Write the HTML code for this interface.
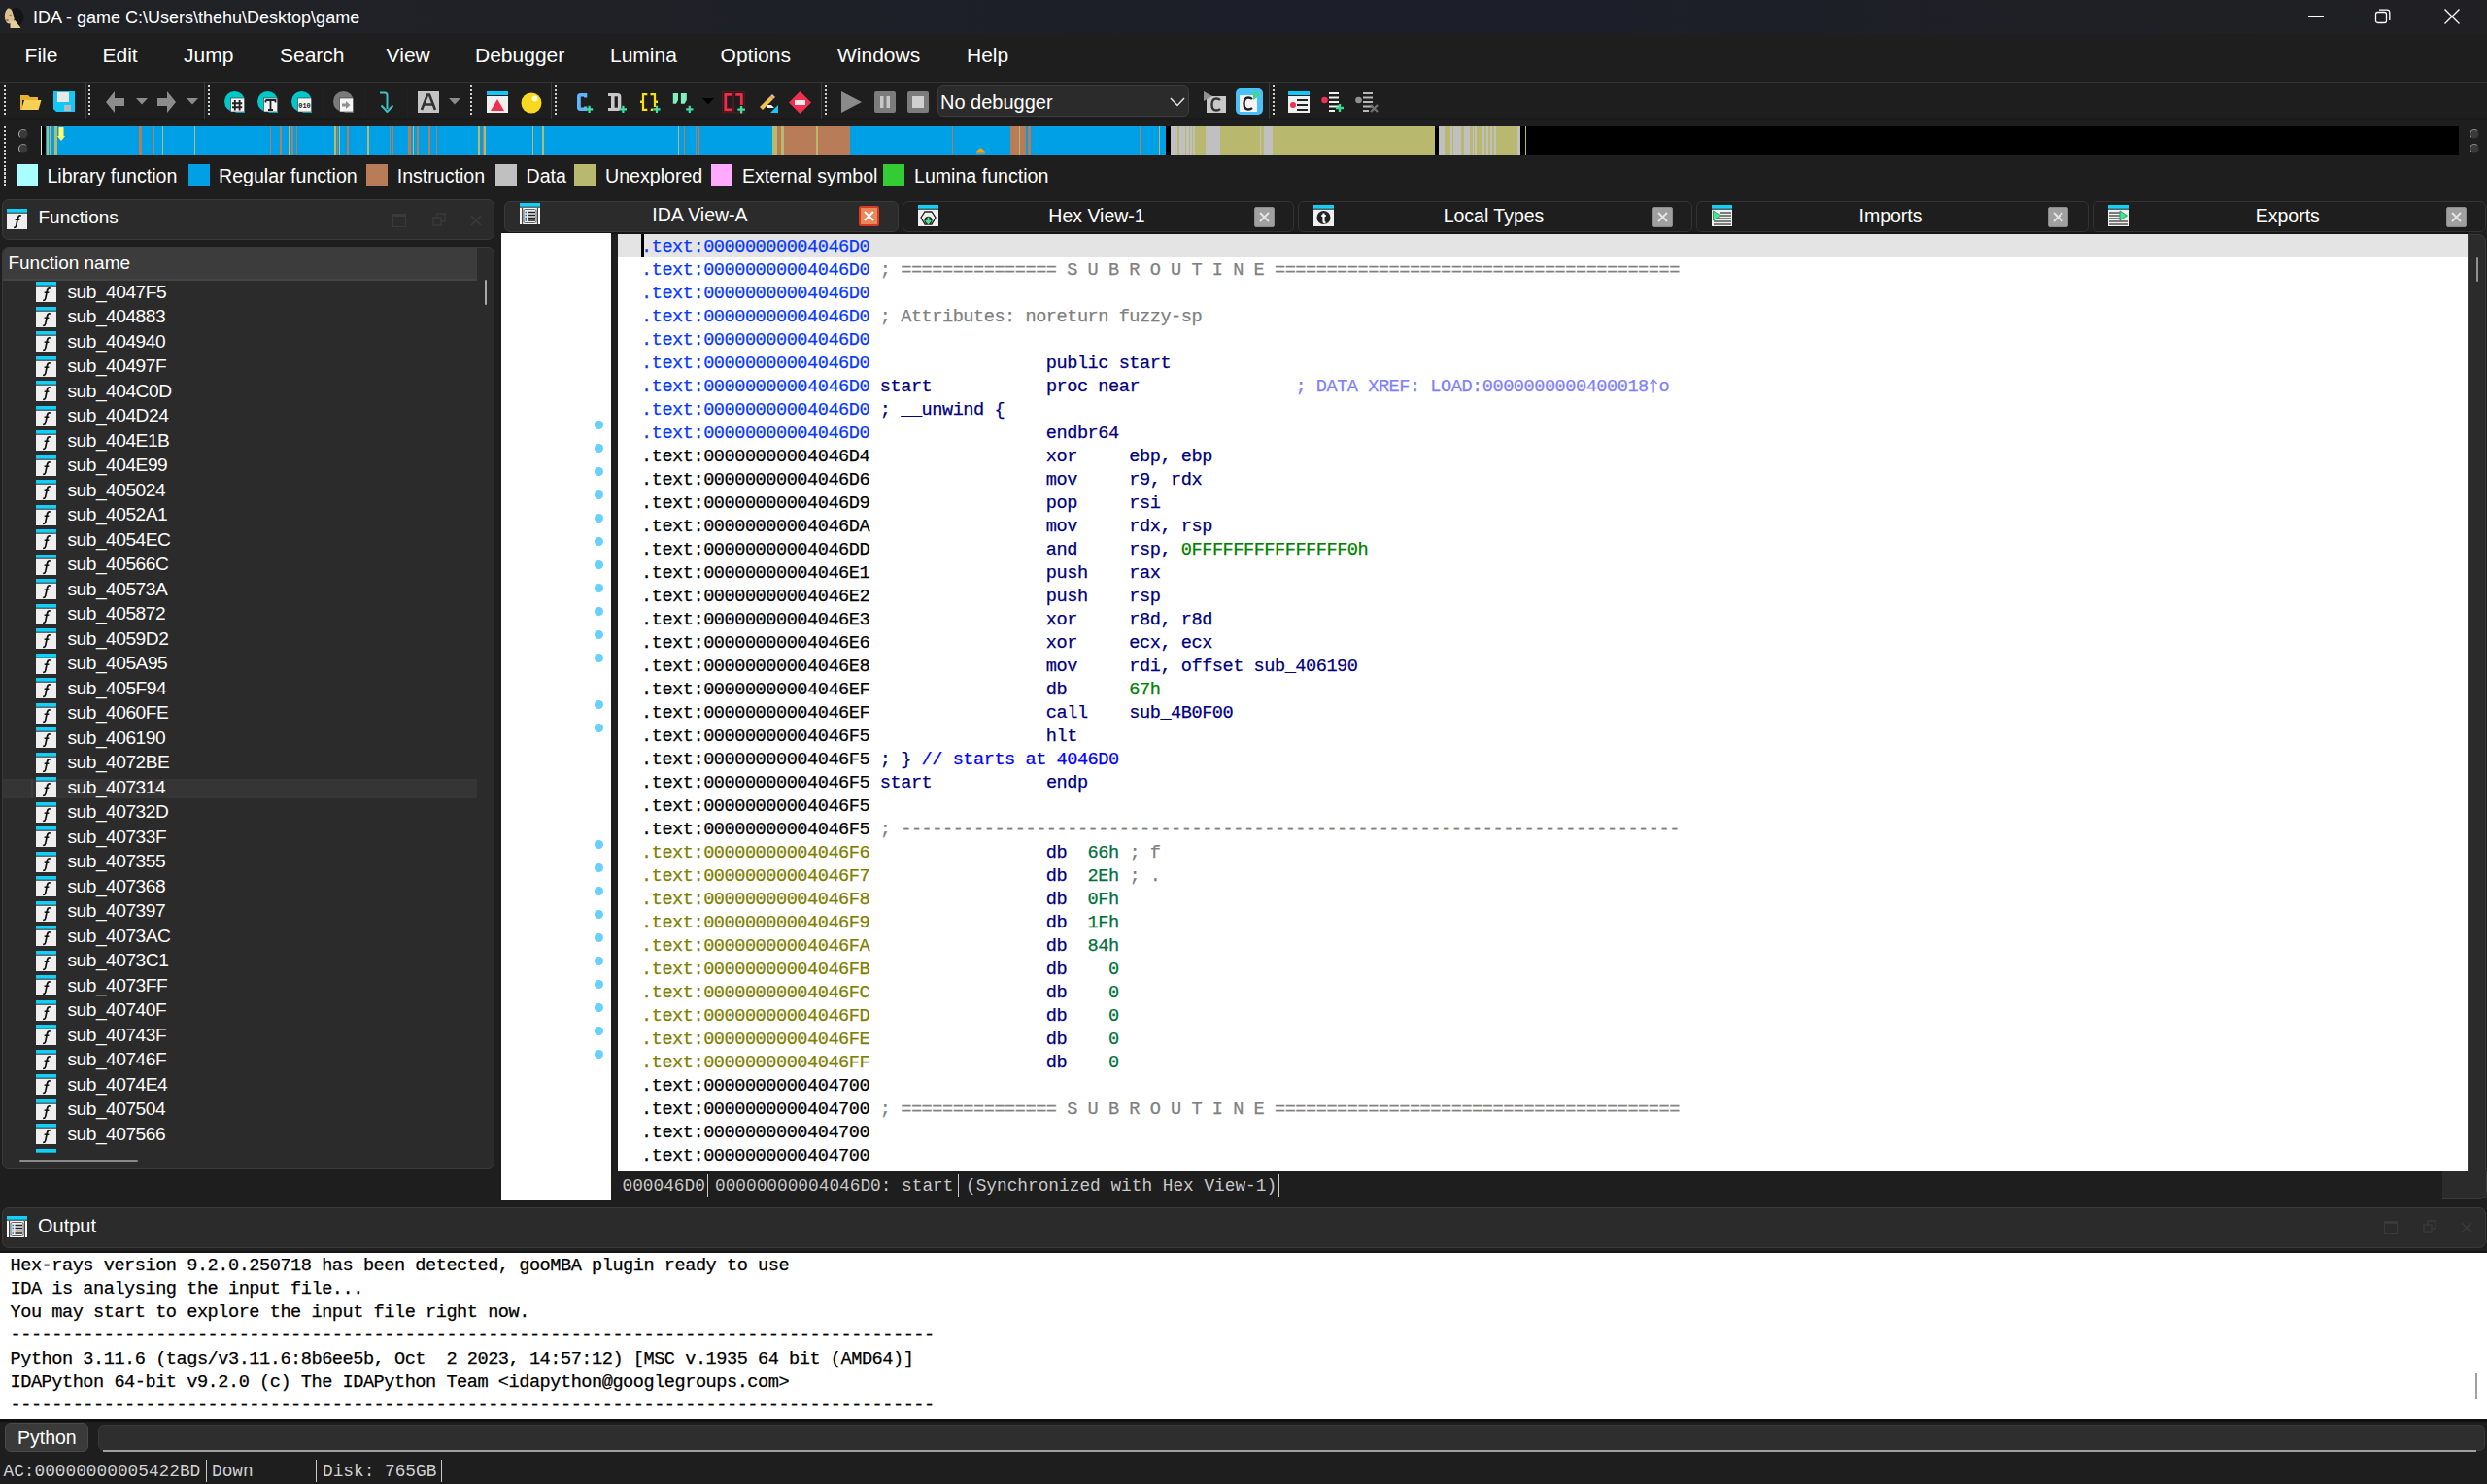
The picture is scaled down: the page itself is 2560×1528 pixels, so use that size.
<!DOCTYPE html><html><head><meta charset="utf-8"><title>IDA</title><style>
html,body{margin:0;padding:0;width:2560px;height:1528px;overflow:hidden;background:#1e1e1e;}
body{position:relative;font-family:"Liberation Sans",sans-serif;color:#fff;}
.a{position:absolute;}
.t{position:absolute;white-space:pre;line-height:1;}
.m{font-family:"Liberation Mono",monospace;}
.box{position:absolute;box-sizing:border-box;border:1px solid #3a3a3a;border-radius:6px;background:#2b2b2b;}
.dl{position:absolute;left:660px;height:24px;white-space:pre;font-family:"Liberation Mono",monospace;font-size:18.6px;letter-spacing:-0.47px;line-height:24px;color:#000;-webkit-text-stroke:0.25px currentColor;}
.fi{position:absolute;left:37px;width:21px;height:21px;}
.fn{position:absolute;left:69px;font-size:19.2px;letter-spacing:-0.5px;line-height:1;white-space:pre;color:#fff;}
.grip{position:absolute;width:2.2px;background:repeating-linear-gradient(#d0d0d0 0 2.2px,transparent 2.2px 3.95px);}
.sep{position:absolute;width:1px;background:#3c3c3c;}
</style></head><body>
<div class="a" style="left:0;top:0;width:2560px;height:33.5px;background:linear-gradient(90deg,#202226 0%,#1f2126 20%,#1c1f29 50%,#1c1f2a 62%,#1f2025 85%,#202023 100%)"></div>
<svg class="a" style="left:0;top:4px" width="30" height="30" viewBox="0 0 30 30"><ellipse cx="17" cy="13.5" rx="7.5" ry="9.5" fill="#141518"/><path d="M8 4.5 Q12 4 13 9 L14.5 14 Q15.5 19.5 10 20.5 Q6 20.5 5 15 Q4 8.5 8 4.5 Z" fill="#dcc090"/><path d="M10.5 19 L15.5 17 L21.5 25 L10.5 25 Z" fill="#e4d09c"/><ellipse cx="7.5" cy="17" rx="1.3" ry="0.9" fill="#b05a40"/><ellipse cx="10.5" cy="11.5" rx="1.3" ry="0.8" fill="#8a7a60"/></svg>
<div class="t" style="left:34px;top:9px;font-size:18px;color:#fff">IDA - game C:\Users\thehu\Desktop\game</div>
<div class="a" style="left:2376px;top:16px;width:16px;height:1px;background:#fff"></div>
<svg class="a" style="left:2444px;top:8px" width="18" height="18" viewBox="0 0 18 18" fill="none" stroke="#fff" stroke-width="1.3"><rect x="1.5" y="4.5" width="11" height="11" rx="2"/><path d="M5 2.2 H13 Q15.8 2.2 15.8 5 V13"/></svg>
<svg class="a" style="left:2515px;top:8px" width="18" height="18" viewBox="0 0 18 18" stroke="#fff" stroke-width="1.4"><path d="M1.5 1.5 L16.5 16.5 M16.5 1.5 L1.5 16.5"/></svg>
<div class="t" style="left:25.6px;top:46px;font-size:21px">File</div>
<div class="t" style="left:105.5px;top:46px;font-size:21px">Edit</div>
<div class="t" style="left:189px;top:46px;font-size:21px">Jump</div>
<div class="t" style="left:288px;top:46px;font-size:21px">Search</div>
<div class="t" style="left:397.6px;top:46px;font-size:21px">View</div>
<div class="t" style="left:489px;top:46px;font-size:21px">Debugger</div>
<div class="t" style="left:628px;top:46px;font-size:21px">Lumina</div>
<div class="t" style="left:741.6px;top:46px;font-size:21px">Options</div>
<div class="t" style="left:862px;top:46px;font-size:21px">Windows</div>
<div class="t" style="left:995px;top:46px;font-size:21px">Help</div>
<div class="a" style="left:0;top:84px;width:2560px;height:1px;background:#333"></div>
<div class="a" style="left:0;top:122px;width:2560px;height:2px;background:#1a1a1a"></div>
<div class="grip" style="left:4px;top:88px;height:30px"></div>
<div class="grip" style="left:91.2px;top:88px;height:30px"></div>
<div class="grip" style="left:214.2px;top:88px;height:30px"></div>
<div class="grip" style="left:483.7px;top:88px;height:30px"></div>
<div class="grip" style="left:570.7px;top:88px;height:30px"></div>
<div class="grip" style="left:848.7px;top:88px;height:30px"></div>
<div class="grip" style="left:1310.2px;top:88px;height:30px"></div>
<div class="sep" style="left:87.5px;top:84px;height:39px;background:#3a3a3a"></div>
<div class="sep" style="left:210px;top:84px;height:39px;background:#3a3a3a"></div>
<div class="sep" style="left:567px;top:84px;height:39px;background:#3a3a3a"></div>
<div class="sep" style="left:844.5px;top:84px;height:39px;background:#3a3a3a"></div>
<div class="sep" style="left:1305.5px;top:84px;height:39px;background:#3a3a3a"></div>
<div class="sep" style="left:331.5px;top:90px;height:30px;background:#222"></div>
<div class="sep" style="left:375.4px;top:90px;height:30px;background:#222"></div>
<div class="sep" style="left:418.5px;top:90px;height:30px;background:#222"></div>
<svg class="a" style="left:21px;top:96px" width="22" height="18" viewBox="0 0 22 18"><path d="M1 2 H8 L10 4 H18 V7 H1 Z" fill="#e8b430"/><path d="M1 17 L4 7 H21.5 L18.5 17 Z" fill="#f8d058"/><path d="M1 2 V17" stroke="#e8b430" stroke-width="2"/></svg>
<svg class="a" style="left:55px;top:94px" width="22" height="22" viewBox="0 0 22 22"><path d="M0 0 H22 V21 H3 L0 18 Z" fill="#12c8f8"/><rect x="4" y="1" width="12" height="10" fill="#e8e8e8"/><rect x="11" y="14" width="7" height="6" fill="#b8b8b8"/></svg>
<svg class="a" style="left:109px;top:94px" width="20" height="22" viewBox="0 0 20 22"><path d="M0 11 L9 0 V7 H19 V15 H9 V22 Z" fill="#8c8c8c"/></svg>
<svg class="a" style="left:140px;top:101px" width="12" height="7" viewBox="0 0 12 7"><path d="M0 0 H12 L6 6.5 Z" fill="#8c8c8c"/></svg>
<svg class="a" style="left:161px;top:94px" width="20" height="22" viewBox="0 0 20 22"><path d="M20 11 L11 0 V7 H1 V15 H11 V22 Z" fill="#8c8c8c"/></svg>
<svg class="a" style="left:192px;top:101px" width="12" height="7" viewBox="0 0 12 7"><path d="M0 0 H12 L6 6.5 Z" fill="#8c8c8c"/></svg>
<svg class="a" style="left:231px;top:94px" width="22" height="22" viewBox="0 0 22 22"><circle cx="10.5" cy="10.5" r="10.5" fill="#00c8c8"/><path d="M21 11 V22 H11 Z" fill="#00c8c8"/><rect x="6.5" y="7" width="14" height="14" fill="#f4f4f4" stroke="#333" stroke-width="0.6"/><path d="M10.8 9 V19.5 M15.6 9 V19.5 M8 12.3 H18.2 M8 16.3 H18.2" stroke="#222" stroke-width="1.9"/></svg>
<svg class="a" style="left:265px;top:94px" width="22" height="22" viewBox="0 0 22 22"><circle cx="10.5" cy="10.5" r="10.5" fill="#00c8c8"/><path d="M21 11 V22 H11 Z" fill="#00c8c8"/><rect x="6.5" y="7" width="14" height="14" fill="#f4f4f4" stroke="#333" stroke-width="0.6"/><path d="M8.5 9 H18.5 V11.5 M8.5 9 V11.5 M13.5 9 V19 M11 19 H16" stroke="#222" stroke-width="1.8" fill="none"/></svg>
<svg class="a" style="left:300px;top:94px" width="22" height="22" viewBox="0 0 22 22"><circle cx="10.5" cy="10.5" r="10.5" fill="#00c8c8"/><path d="M21 11 V22 H11 Z" fill="#00c8c8"/><rect x="6.5" y="7" width="14" height="14" fill="#f4f4f4" stroke="#333" stroke-width="0.6"/><text x="13.5" y="17" font-family="Liberation Mono" font-size="7" font-weight="bold" text-anchor="middle" fill="#222">010</text></svg>
<svg class="a" style="left:343px;top:94px" width="22" height="22" viewBox="0 0 22 22"><circle cx="10.5" cy="10.5" r="10.5" fill="#7a7a7a"/><path d="M21 11 V22 H11 Z" fill="#7a7a7a"/><rect x="6.5" y="7" width="14" height="14" fill="#f4f4f4" stroke="#333" stroke-width="0.6"/><path d="M9 12.5 H13 V10 L17.5 14 L13 18 V15.5 H9 Z" fill="#909090"/></svg>
<svg class="a" style="left:390px;top:94px" width="16" height="22" viewBox="0 0 16 22"><path d="M1 1.5 H6 Q8.5 1.5 8.5 4 V18" stroke="#40c0c0" stroke-width="2" fill="none"/><path d="M2.5 14.5 L8.5 21 L14.5 14.5" stroke="#40c0c0" stroke-width="2" fill="none"/></svg>
<svg class="a" style="left:429.5px;top:93.5px" width="22" height="22" viewBox="0 0 22 22"><rect width="22" height="22" fill="#c4c4c4"/><path d="M4 19 L10 3.5 H12 L18 19 M6.5 13.5 H15.5" stroke="#333" stroke-width="2.6" fill="none"/></svg>
<svg class="a" style="left:462px;top:101px" width="12" height="7" viewBox="0 0 12 7"><path d="M0 0 H12 L6 6.5 Z" fill="#8c8c8c"/></svg>
<svg class="a" style="left:501px;top:94px" width="22" height="22" viewBox="0 0 22 22"><rect y="0" width="22" height="4" fill="#12c8f8"/><rect y="5" width="22" height="17" fill="#f0f0f0"/><path d="M4 20 L11 8 L18 20 Z" fill="#f03050"/></svg>
<svg class="a" style="left:535.5px;top:94.5px" width="22" height="22" viewBox="0 0 22 22"><circle cx="11" cy="11" r="10.5" fill="#f8d820"/><circle cx="14.5" cy="6.5" r="3" fill="#fff8c0"/></svg>
<svg class="a" style="left:585px;top:88px" width="140" height="34" viewBox="585 88 140 34"><path d="M597.5 96 H604.3 V100.6 H601 V99.4 H597.8 V110.6 H601 V109.4 H604.3 V114 H597.5 Q594 114 594 110.5 V99.5 Q594 96 597.5 96 Z" fill="#62b4ff"/><path d="M603.0 112.3 H610.2 M606.6 108.7 V115.89999999999999" stroke="#40e0a0" stroke-width="2.2"/><path d="M626 96 H635.5 Q639.3 96 639.3 99.5 V110.5 Q639.3 114 635.5 114 H626 V111 H629 V99 H626 Z" fill="#c8c8c8"/><rect x="632.6" y="99.3" width="3.3" height="11.4" fill="#1e1e1e"/><path d="M637.8 112.3 H645.0 M641.4 108.7 V115.89999999999999" stroke="#40e0a0" stroke-width="2.2"/><path d="M666.3 97.2 H662 V104.6 H659 M659 105 H662 V112.8 H666.3" stroke="#f8e010" stroke-width="2.2" fill="none"/><path d="M669.5 97.2 H674 V104.6 H677 M677 105 H674 V110" stroke="#f8e010" stroke-width="2.2" fill="none"/><rect x="669.8" y="111.6" width="2.4" height="2.4" fill="#f8e010"/><path d="M672.4 112.3 H679.6 M676 108.7 V115.89999999999999" stroke="#40e0a0" stroke-width="2.2"/><path d="M692.8 96 H698 V103 L696 106.8 H692.8 Z M700.9 96 H706.8 V103 L704.6 106.8 H700.9 Z" fill="#80f0c0"/><rect x="692.8" y="103.3" width="2.6" height="0" fill="#80f0c0"/><path d="M706.1999999999999 112.3 H713.4 M709.8 108.7 V115.89999999999999" stroke="#40e0a0" stroke-width="2.2"/></svg>
<svg class="a" style="left:723px;top:101px" width="12" height="7" viewBox="0 0 12 7"><path d="M0 0 H12 L6 6.5 Z" fill="#000"/></svg>
<svg class="a" style="left:740px;top:88px" width="30" height="34" viewBox="740 88 30 34"><rect x="743.6" y="94.3" width="10.6" height="21.5" fill="none" stroke="#5a1a20" stroke-width="1"/><rect x="755.6" y="94.3" width="10.6" height="21.5" fill="none" stroke="#5a1a20" stroke-width="1"/><path d="M753.3 97.3 H746.8 V112.8 H753.3" stroke="#f82848" stroke-width="2.8" fill="none"/><path d="M757.2 97.3 H763.3 V108" stroke="#f82848" stroke-width="2.8" fill="none"/><path d="M759.3 112.7 H766.9 M763.1 108.9 V116.5" stroke="#40e0a0" stroke-width="2.3"/></svg>
<svg class="a" style="left:781px;top:96px" width="20" height="20" viewBox="0 0 20 20"><path d="M1 14 L12 3 L15 6 L4 17 Z" fill="#f0c050"/><path d="M12 3 L14 1 L17 4 L15 6 Z" fill="#e8b898"/><path d="M8 15 H16 L13 12 H8 Z" fill="#f0f0f0"/><path d="M20 12 V20 H12 Z" fill="#12c8f8"/></svg>
<svg class="a" style="left:812px;top:94px" width="23" height="23" viewBox="0 0 23 23"><path d="M11.5 0 L23 11.5 L11.5 23 L0 11.5 Z" fill="#f03050"/><rect x="6" y="9" width="11" height="5" fill="#f8e8e8"/></svg>
<svg class="a" style="left:865.5px;top:94px" width="21" height="22" viewBox="0 0 21 22"><path d="M0 0 L21 11 L0 22 Z" fill="#8a8a8a"/></svg>
<svg class="a" style="left:900px;top:94px" width="22" height="22" viewBox="0 0 22 22"><rect width="22" height="22" rx="2" fill="#7c7c7c"/><rect x="6" y="5" width="3.5" height="12" fill="#c8c8c8"/><rect x="12.5" y="5" width="3.5" height="12" fill="#c8c8c8"/></svg>
<svg class="a" style="left:934px;top:94px" width="22" height="22" viewBox="0 0 22 22"><rect width="22" height="22" rx="2" fill="#7c7c7c"/><rect x="5" y="5" width="12" height="12" fill="#d0d0d0"/></svg>
<div class="a" style="left:964.5px;top:88px;width:259px;height:32px;box-sizing:border-box;border:1px solid #3c3c3c;border-radius:6px;background:#2b2b2b"></div>
<div class="t" style="left:968px;top:95px;font-size:20px">No debugger</div>
<svg class="a" style="left:1204px;top:100px" width="16" height="10" viewBox="0 0 16 10"><path d="M1 1 L8 8.5 L15 1" stroke="#e0e0e0" stroke-width="1.5" fill="none"/></svg>
<svg class="a" style="left:1239px;top:94px" width="24" height="22" viewBox="0 0 24 22"><rect x="3" y="5" width="20" height="17" fill="#c8c8c8"/><path d="M0 0 L9 5 L0 10 Z" fill="#909090"/><path d="M17 9 Q15.5 7.5 13 7.5 Q8.5 7.5 8.5 13.5 Q8.5 19.5 13 19.5 Q15.5 19.5 17 18" stroke="#333" stroke-width="2.4" fill="none"/></svg>
<svg class="a" style="left:1271.5px;top:91px" width="28" height="27" viewBox="0 0 28 27"><rect width="28" height="27" rx="5" fill="#48c0f8"/><rect x="4" y="7" width="18" height="17" fill="#f4f4f4"/><path d="M17 11 Q15.5 9.5 13 9.5 Q8.5 9.5 8.5 15.5 Q8.5 21.5 13 21.5 Q15.5 21.5 17 20" stroke="#222" stroke-width="2.4" fill="none"/><path d="M18 2 L26 7 L18 12 Z" fill="#40d890"/></svg>
<svg class="a" style="left:1326px;top:94px" width="22" height="22" viewBox="0 0 22 22"><rect width="22" height="4" fill="#12c8f8"/><rect y="5" width="22" height="17" fill="#f0f0f0"/><circle cx="5" cy="14" r="3" fill="#f03050"/><path d="M9 9 H20 M9 14 H20 M9 19 H20" stroke="#222" stroke-width="2"/></svg>
<svg class="a" style="left:1360px;top:94px" width="24" height="22" viewBox="0 0 24 22"><circle cx="3.5" cy="9" r="3.3" fill="#f03050"/><path d="M8 2 H18 M8 6.5 H18 M8 11 H18 M8 15.5 H18 M8 20 H14" stroke="#f0f0f0" stroke-width="2.2"/><path d="M15 17 H23 M19 13 V21" stroke="#40d890" stroke-width="2.4"/></svg>
<svg class="a" style="left:1395px;top:94px" width="25" height="22" viewBox="0 0 25 22"><circle cx="3.5" cy="9" r="3.3" fill="#909090"/><path d="M8 2 H18 M8 6.5 H18 M8 11 H18 M8 15.5 H18 M8 20 H14" stroke="#b8b8b8" stroke-width="2.2"/><path d="M16 14 L23 21 M23 14 L16 21" stroke="#707070" stroke-width="2.4"/></svg>
<div class="grip" style="left:4px;top:130px;height:62px"></div>
<div class="a" style="left:19px;top:133px;width:10px;height:10px;box-sizing:border-box;border-radius:50%;background:#3a3a3a;border:1.3px solid #2a2a2a;border-left-color:#b0b0b0;border-top-color:#888"></div>
<div class="a" style="left:19px;top:148px;width:10px;height:10px;box-sizing:border-box;border-radius:50%;background:#3a3a3a;border:1.3px solid #2a2a2a;border-left-color:#b0b0b0;border-top-color:#888"></div>
<div class="a" style="left:2542px;top:133px;width:10px;height:10px;box-sizing:border-box;border-radius:50%;background:#3a3a3a;border:1.3px solid #2a2a2a;border-left-color:#b0b0b0;border-top-color:#888"></div>
<div class="a" style="left:2542px;top:148px;width:10px;height:10px;box-sizing:border-box;border-radius:50%;background:#3a3a3a;border:1.3px solid #2a2a2a;border-left-color:#b0b0b0;border-top-color:#888"></div>
<div class="a" style="left:0;top:130px;width:2560px;height:30px">
<div class="a" style="left:41.5px;top:0;width:1.0px;height:30px;background:#e0e0e0"></div>
<div class="a" style="left:42.5px;top:0;width:4.5px;height:30px;background:#000"></div>
<div class="a" style="left:47px;top:0;width:1153px;height:30px;background:#00a0e6"></div>
<div class="a" style="left:48px;top:0;width:2px;height:30px;background:#b8b86e"></div>
<div class="a" style="left:51px;top:0;width:2px;height:30px;background:#b8b86e"></div>
<div class="a" style="left:56px;top:0;width:3px;height:30px;background:#b8b86e"></div>
<div class="a" style="left:143px;top:0;width:2.5px;height:30px;background:#b87c58"></div>
<div class="a" style="left:158px;top:0;width:1px;height:30px;background:#b87c58"></div>
<div class="a" style="left:166.5px;top:0;width:1.0px;height:30px;background:#b8b86e"></div>
<div class="a" style="left:199.5px;top:0;width:1.0px;height:30px;background:#b8b86e"></div>
<div class="a" style="left:277.5px;top:0;width:1.0px;height:30px;background:#b87c58"></div>
<div class="a" style="left:288px;top:0;width:1.5px;height:30px;background:#b87c58"></div>
<div class="a" style="left:297px;top:0;width:1.5px;height:30px;background:#b8b86e"></div>
<div class="a" style="left:300px;top:0;width:1.5px;height:30px;background:#b87c58"></div>
<div class="a" style="left:305px;top:0;width:1px;height:30px;background:#b87c58"></div>
<div class="a" style="left:344px;top:0;width:2px;height:30px;background:#b8b86e"></div>
<div class="a" style="left:347px;top:0;width:1px;height:30px;background:#b87c58"></div>
<div class="a" style="left:348.5px;top:0;width:1.5px;height:30px;background:#b8b86e"></div>
<div class="a" style="left:357px;top:0;width:1.5px;height:30px;background:#b87c58"></div>
<div class="a" style="left:378px;top:0;width:1.5px;height:30px;background:#b8b86e"></div>
<div class="a" style="left:401px;top:0;width:1px;height:30px;background:#b87c58"></div>
<div class="a" style="left:404px;top:0;width:1px;height:30px;background:#b87c58"></div>
<div class="a" style="left:420px;top:0;width:3px;height:30px;background:#b87c58"></div>
<div class="a" style="left:425px;top:0;width:1px;height:30px;background:#b8b86e"></div>
<div class="a" style="left:429px;top:0;width:2px;height:30px;background:#b87c58"></div>
<div class="a" style="left:441px;top:0;width:2px;height:30px;background:#b87c58"></div>
<div class="a" style="left:449px;top:0;width:1px;height:30px;background:#b87c58"></div>
<div class="a" style="left:492px;top:0;width:2px;height:30px;background:#b8b86e"></div>
<div class="a" style="left:497px;top:0;width:1px;height:30px;background:#b87c58"></div>
<div class="a" style="left:498px;top:0;width:2px;height:30px;background:#b8b86e"></div>
<div class="a" style="left:548px;top:0;width:1px;height:30px;background:#b8b86e"></div>
<div class="a" style="left:558px;top:0;width:2px;height:30px;background:#b8b86e"></div>
<div class="a" style="left:698px;top:0;width:1px;height:30px;background:#b8b86e"></div>
<div class="a" style="left:704px;top:0;width:1px;height:30px;background:#b87c58"></div>
<div class="a" style="left:716px;top:0;width:1px;height:30px;background:#b87c58"></div>
<div class="a" style="left:719px;top:0;width:1px;height:30px;background:#b87c58"></div>
<div class="a" style="left:795px;top:0;width:5px;height:30px;background:#b8b86e"></div>
<div class="a" style="left:800px;top:0;width:4px;height:30px;background:#b87c58"></div>
<div class="a" style="left:804px;top:0;width:3px;height:30px;background:#b8b86e"></div>
<div class="a" style="left:807px;top:0;width:33px;height:30px;background:#b87c58"></div>
<div class="a" style="left:840px;top:0;width:2px;height:30px;background:#b8b86e"></div>
<div class="a" style="left:842px;top:0;width:33px;height:30px;background:#b87c58"></div>
<div class="a" style="left:980px;top:0;width:1px;height:30px;background:#b87c58"></div>
<div class="a" style="left:1040px;top:0;width:9px;height:30px;background:#b87c58"></div>
<div class="a" style="left:1049px;top:0;width:1px;height:30px;background:#b8b86e"></div>
<div class="a" style="left:1050px;top:0;width:6px;height:30px;background:#b87c58"></div>
<div class="a" style="left:1058px;top:0;width:3px;height:30px;background:#b87c58"></div>
<div class="a" style="left:1173px;top:0;width:2px;height:30px;background:#b87c58"></div>
<div class="a" style="left:1193px;top:0;width:1px;height:30px;background:#b8b86e"></div>
<div class="a" style="left:1200px;top:0;width:5px;height:30px;background:#000"></div>
<div class="a" style="left:1205px;top:0;width:7px;height:30px;background:#c0c0c0"></div>
<div class="a" style="left:1212px;top:0;width:2px;height:30px;background:#b8b86e"></div>
<div class="a" style="left:1214px;top:0;width:6px;height:30px;background:#c0c0c0"></div>
<div class="a" style="left:1220px;top:0;width:1px;height:30px;background:#b8b86e"></div>
<div class="a" style="left:1221px;top:0;width:2.5px;height:30px;background:#c0c0c0"></div>
<div class="a" style="left:1223.5px;top:0;width:1.0px;height:30px;background:#b8b86e"></div>
<div class="a" style="left:1224.5px;top:0;width:2.0px;height:30px;background:#c0c0c0"></div>
<div class="a" style="left:1226.5px;top:0;width:1.0px;height:30px;background:#b8b86e"></div>
<div class="a" style="left:1227.5px;top:0;width:2.5px;height:30px;background:#c0c0c0"></div>
<div class="a" style="left:1230px;top:0;width:11px;height:30px;background:#b8b86e"></div>
<div class="a" style="left:1241px;top:0;width:15px;height:30px;background:#c0c0c0"></div>
<div class="a" style="left:1256px;top:0;width:41px;height:30px;background:#b8b86e"></div>
<div class="a" style="left:1297px;top:0;width:1px;height:30px;background:#c0c0c0"></div>
<div class="a" style="left:1298px;top:0;width:3px;height:30px;background:#b8b86e"></div>
<div class="a" style="left:1301px;top:0;width:9px;height:30px;background:#c0c0c0"></div>
<div class="a" style="left:1310px;top:0;width:167px;height:30px;background:#b8b86e"></div>
<div class="a" style="left:1477px;top:0;width:4px;height:30px;background:#000"></div>
<div class="a" style="left:1481px;top:0;width:6px;height:30px;background:#c0c0c0"></div>
<div class="a" style="left:1487px;top:0;width:6px;height:30px;background:#b8b86e"></div>
<div class="a" style="left:1493px;top:0;width:2px;height:30px;background:#c0c0c0"></div>
<div class="a" style="left:1495px;top:0;width:1px;height:30px;background:#b8b86e"></div>
<div class="a" style="left:1496px;top:0;width:8px;height:30px;background:#c0c0c0"></div>
<div class="a" style="left:1504px;top:0;width:3px;height:30px;background:#b8b86e"></div>
<div class="a" style="left:1507px;top:0;width:6px;height:30px;background:#c0c0c0"></div>
<div class="a" style="left:1513px;top:0;width:3px;height:30px;background:#b8b86e"></div>
<div class="a" style="left:1516px;top:0;width:1px;height:30px;background:#c0c0c0"></div>
<div class="a" style="left:1517px;top:0;width:1px;height:30px;background:#b8b86e"></div>
<div class="a" style="left:1518px;top:0;width:2px;height:30px;background:#c0c0c0"></div>
<div class="a" style="left:1520px;top:0;width:6px;height:30px;background:#b8b86e"></div>
<div class="a" style="left:1526px;top:0;width:2px;height:30px;background:#c0c0c0"></div>
<div class="a" style="left:1528px;top:0;width:2px;height:30px;background:#b8b86e"></div>
<div class="a" style="left:1530px;top:0;width:2px;height:30px;background:#c0c0c0"></div>
<div class="a" style="left:1532px;top:0;width:2px;height:30px;background:#b8b86e"></div>
<div class="a" style="left:1534px;top:0;width:1.5px;height:30px;background:#c0c0c0"></div>
<div class="a" style="left:1535.5px;top:0;width:2.5px;height:30px;background:#b8b86e"></div>
<div class="a" style="left:1538px;top:0;width:2px;height:30px;background:#c0c0c0"></div>
<div class="a" style="left:1540px;top:0;width:22px;height:30px;background:#b8b86e"></div>
<div class="a" style="left:1562px;top:0;width:3px;height:30px;background:#c0c0c0"></div>
<div class="a" style="left:1565px;top:0;width:5px;height:30px;background:#000"></div>
<div class="a" style="left:1570px;top:0;width:1px;height:30px;background:#b8b86e"></div>
<div class="a" style="left:1571px;top:0;width:959.5px;height:30px;background:#000"></div>
<svg class="a" style="left:59px;top:1px" width="8" height="15" viewBox="0 0 8 15"><path d="M1.5 0 H6.5 V9 H8 L4 14 L0 9 H1.5 Z" fill="#ffff70"/></svg>
<svg class="a" style="left:1005px;top:22px" width="9" height="7" viewBox="0 0 9 7"><path d="M2 2 Q4.5 -1 7 2 L9 4 V7 H0 V4 Z" fill="#ffa000"/><rect y="5" width="9" height="2" fill="#80a080"/></svg>
</div>
<div class="a" style="left:17px;top:169px;width:22px;height:23px;background:#aaffff"></div>
<div class="t" style="left:48.4px;top:171.5px;font-size:19.6px">Library function</div>
<div class="a" style="left:194px;top:169px;width:22px;height:23px;background:#00a0e6"></div>
<div class="t" style="left:225px;top:171.5px;font-size:19.6px">Regular function</div>
<div class="a" style="left:376.7px;top:169px;width:22px;height:23px;background:#b87c58"></div>
<div class="t" style="left:408.7px;top:171.5px;font-size:19.6px">Instruction</div>
<div class="a" style="left:510px;top:169px;width:22px;height:23px;background:#c0c0c0"></div>
<div class="t" style="left:541.5px;top:171.5px;font-size:19.6px">Data</div>
<div class="a" style="left:591px;top:169px;width:22px;height:23px;background:#b8b86e"></div>
<div class="t" style="left:623px;top:171.5px;font-size:19.6px">Unexplored</div>
<div class="a" style="left:732px;top:169px;width:22px;height:23px;background:#ffaaff"></div>
<div class="t" style="left:764px;top:171.5px;font-size:19.6px">External symbol</div>
<div class="a" style="left:909px;top:169px;width:22px;height:23px;background:#33cc33"></div>
<div class="t" style="left:941px;top:171.5px;font-size:19.6px">Lumina function</div>
<div class="box" style="left:1.5px;top:205px;width:507px;height:42px;border-radius:7px"></div>
<svg class="a" style="left:7.3px;top:214.5px" width="21" height="21" viewBox="0 0 21 21"><rect width="21" height="3.7" fill="#12d0f8"/><rect y="4.7" width="21" height="16.3" fill="#efefef"/><path d="M14.8 7.2 Q13.5 6.4 12.4 7.4 Q11.6 8.4 11.1 11 L9.7 17.6 Q9.2 19.6 7.2 19.2" stroke="#111" stroke-width="1.7" fill="none"/><path d="M8.6 11.2 H13.4" stroke="#111" stroke-width="1.5"/></svg>
<div class="t" style="left:39.5px;top:214.4px;font-size:19px">Functions</div>
<div class="a" style="left:404px;top:220px;width:14px;height:14px;box-sizing:border-box;border:1.5px solid #3a3a3a;border-top-width:3px"></div>
<svg class="a" style="left:445px;top:219px" width="14" height="14" viewBox="0 0 14 14" fill="none" stroke="#3a3a3a" stroke-width="1.5"><rect x="1" y="5" width="8" height="8"/><path d="M5 5 V1 H13 V9 H9"/></svg>
<svg class="a" style="left:484px;top:221px" width="12" height="12" viewBox="0 0 12 12" stroke="#3a3a3a" stroke-width="1.6"><path d="M1 1 L11 11 M11 1 L1 11"/></svg>
<div class="box" style="left:1.5px;top:253.5px;width:507px;height:950px;border-radius:7px"></div>
<div class="a" style="left:2.5px;top:254.5px;width:488px;height:33px;background:#3c3c3c;border-top-left-radius:6px"></div>
<div class="a" style="left:2.5px;top:287px;width:488px;height:1.5px;background:#444"></div>
<div class="t" style="left:8.4px;top:260.7px;font-size:19px">Function name</div>
<div class="a" style="left:498.5px;top:288px;width:2px;height:26px;background:#a8a8a8;border-radius:1px"></div>
<div class="a" style="left:3px;top:801.8px;width:488px;height:20px;background:#353535"></div>
<div class="a" style="left:32px;top:801.8px;width:2px;height:20px;background:#3d3d3d"></div>
<div class="a" style="left:2.5px;top:289.5px;width:488px;height:897.5px;overflow:hidden">
<svg class="a" style="left:34.9px;top:0.8px" width="21" height="21" viewBox="0 0 21 21"><rect width="21" height="3.7" fill="#12d0f8"/><rect y="4.7" width="21" height="16.3" fill="#efefef"/><path d="M14.8 7.2 Q13.5 6.4 12.4 7.4 Q11.6 8.4 11.1 11 L9.7 17.6 Q9.2 19.6 7.2 19.2" stroke="#111" stroke-width="1.7" fill="none"/><path d="M8.6 11.2 H13.4" stroke="#111" stroke-width="1.5"/></svg>
<div class="fn" style="left:67px;top:1.1px">sub_4047F5</div>
<svg class="a" style="left:34.9px;top:26.3px" width="21" height="21" viewBox="0 0 21 21"><rect width="21" height="3.7" fill="#12d0f8"/><rect y="4.7" width="21" height="16.3" fill="#efefef"/><path d="M14.8 7.2 Q13.5 6.4 12.4 7.4 Q11.6 8.4 11.1 11 L9.7 17.6 Q9.2 19.6 7.2 19.2" stroke="#111" stroke-width="1.7" fill="none"/><path d="M8.6 11.2 H13.4" stroke="#111" stroke-width="1.5"/></svg>
<div class="fn" style="left:67px;top:26.6px">sub_404883</div>
<svg class="a" style="left:34.9px;top:51.8px" width="21" height="21" viewBox="0 0 21 21"><rect width="21" height="3.7" fill="#12d0f8"/><rect y="4.7" width="21" height="16.3" fill="#efefef"/><path d="M14.8 7.2 Q13.5 6.4 12.4 7.4 Q11.6 8.4 11.1 11 L9.7 17.6 Q9.2 19.6 7.2 19.2" stroke="#111" stroke-width="1.7" fill="none"/><path d="M8.6 11.2 H13.4" stroke="#111" stroke-width="1.5"/></svg>
<div class="fn" style="left:67px;top:52.1px">sub_404940</div>
<svg class="a" style="left:34.9px;top:77.3px" width="21" height="21" viewBox="0 0 21 21"><rect width="21" height="3.7" fill="#12d0f8"/><rect y="4.7" width="21" height="16.3" fill="#efefef"/><path d="M14.8 7.2 Q13.5 6.4 12.4 7.4 Q11.6 8.4 11.1 11 L9.7 17.6 Q9.2 19.6 7.2 19.2" stroke="#111" stroke-width="1.7" fill="none"/><path d="M8.6 11.2 H13.4" stroke="#111" stroke-width="1.5"/></svg>
<div class="fn" style="left:67px;top:77.6px">sub_40497F</div>
<svg class="a" style="left:34.9px;top:102.8px" width="21" height="21" viewBox="0 0 21 21"><rect width="21" height="3.7" fill="#12d0f8"/><rect y="4.7" width="21" height="16.3" fill="#efefef"/><path d="M14.8 7.2 Q13.5 6.4 12.4 7.4 Q11.6 8.4 11.1 11 L9.7 17.6 Q9.2 19.6 7.2 19.2" stroke="#111" stroke-width="1.7" fill="none"/><path d="M8.6 11.2 H13.4" stroke="#111" stroke-width="1.5"/></svg>
<div class="fn" style="left:67px;top:103.1px">sub_404C0D</div>
<svg class="a" style="left:34.9px;top:128.3px" width="21" height="21" viewBox="0 0 21 21"><rect width="21" height="3.7" fill="#12d0f8"/><rect y="4.7" width="21" height="16.3" fill="#efefef"/><path d="M14.8 7.2 Q13.5 6.4 12.4 7.4 Q11.6 8.4 11.1 11 L9.7 17.6 Q9.2 19.6 7.2 19.2" stroke="#111" stroke-width="1.7" fill="none"/><path d="M8.6 11.2 H13.4" stroke="#111" stroke-width="1.5"/></svg>
<div class="fn" style="left:67px;top:128.6px">sub_404D24</div>
<svg class="a" style="left:34.9px;top:153.8px" width="21" height="21" viewBox="0 0 21 21"><rect width="21" height="3.7" fill="#12d0f8"/><rect y="4.7" width="21" height="16.3" fill="#efefef"/><path d="M14.8 7.2 Q13.5 6.4 12.4 7.4 Q11.6 8.4 11.1 11 L9.7 17.6 Q9.2 19.6 7.2 19.2" stroke="#111" stroke-width="1.7" fill="none"/><path d="M8.6 11.2 H13.4" stroke="#111" stroke-width="1.5"/></svg>
<div class="fn" style="left:67px;top:154.1px">sub_404E1B</div>
<svg class="a" style="left:34.9px;top:179.3px" width="21" height="21" viewBox="0 0 21 21"><rect width="21" height="3.7" fill="#12d0f8"/><rect y="4.7" width="21" height="16.3" fill="#efefef"/><path d="M14.8 7.2 Q13.5 6.4 12.4 7.4 Q11.6 8.4 11.1 11 L9.7 17.6 Q9.2 19.6 7.2 19.2" stroke="#111" stroke-width="1.7" fill="none"/><path d="M8.6 11.2 H13.4" stroke="#111" stroke-width="1.5"/></svg>
<div class="fn" style="left:67px;top:179.6px">sub_404E99</div>
<svg class="a" style="left:34.9px;top:204.8px" width="21" height="21" viewBox="0 0 21 21"><rect width="21" height="3.7" fill="#12d0f8"/><rect y="4.7" width="21" height="16.3" fill="#efefef"/><path d="M14.8 7.2 Q13.5 6.4 12.4 7.4 Q11.6 8.4 11.1 11 L9.7 17.6 Q9.2 19.6 7.2 19.2" stroke="#111" stroke-width="1.7" fill="none"/><path d="M8.6 11.2 H13.4" stroke="#111" stroke-width="1.5"/></svg>
<div class="fn" style="left:67px;top:205.1px">sub_405024</div>
<svg class="a" style="left:34.9px;top:230.3px" width="21" height="21" viewBox="0 0 21 21"><rect width="21" height="3.7" fill="#12d0f8"/><rect y="4.7" width="21" height="16.3" fill="#efefef"/><path d="M14.8 7.2 Q13.5 6.4 12.4 7.4 Q11.6 8.4 11.1 11 L9.7 17.6 Q9.2 19.6 7.2 19.2" stroke="#111" stroke-width="1.7" fill="none"/><path d="M8.6 11.2 H13.4" stroke="#111" stroke-width="1.5"/></svg>
<div class="fn" style="left:67px;top:230.6px">sub_4052A1</div>
<svg class="a" style="left:34.9px;top:255.8px" width="21" height="21" viewBox="0 0 21 21"><rect width="21" height="3.7" fill="#12d0f8"/><rect y="4.7" width="21" height="16.3" fill="#efefef"/><path d="M14.8 7.2 Q13.5 6.4 12.4 7.4 Q11.6 8.4 11.1 11 L9.7 17.6 Q9.2 19.6 7.2 19.2" stroke="#111" stroke-width="1.7" fill="none"/><path d="M8.6 11.2 H13.4" stroke="#111" stroke-width="1.5"/></svg>
<div class="fn" style="left:67px;top:256.1px">sub_4054EC</div>
<svg class="a" style="left:34.9px;top:281.3px" width="21" height="21" viewBox="0 0 21 21"><rect width="21" height="3.7" fill="#12d0f8"/><rect y="4.7" width="21" height="16.3" fill="#efefef"/><path d="M14.8 7.2 Q13.5 6.4 12.4 7.4 Q11.6 8.4 11.1 11 L9.7 17.6 Q9.2 19.6 7.2 19.2" stroke="#111" stroke-width="1.7" fill="none"/><path d="M8.6 11.2 H13.4" stroke="#111" stroke-width="1.5"/></svg>
<div class="fn" style="left:67px;top:281.6px">sub_40566C</div>
<svg class="a" style="left:34.9px;top:306.8px" width="21" height="21" viewBox="0 0 21 21"><rect width="21" height="3.7" fill="#12d0f8"/><rect y="4.7" width="21" height="16.3" fill="#efefef"/><path d="M14.8 7.2 Q13.5 6.4 12.4 7.4 Q11.6 8.4 11.1 11 L9.7 17.6 Q9.2 19.6 7.2 19.2" stroke="#111" stroke-width="1.7" fill="none"/><path d="M8.6 11.2 H13.4" stroke="#111" stroke-width="1.5"/></svg>
<div class="fn" style="left:67px;top:307.1px">sub_40573A</div>
<svg class="a" style="left:34.9px;top:332.3px" width="21" height="21" viewBox="0 0 21 21"><rect width="21" height="3.7" fill="#12d0f8"/><rect y="4.7" width="21" height="16.3" fill="#efefef"/><path d="M14.8 7.2 Q13.5 6.4 12.4 7.4 Q11.6 8.4 11.1 11 L9.7 17.6 Q9.2 19.6 7.2 19.2" stroke="#111" stroke-width="1.7" fill="none"/><path d="M8.6 11.2 H13.4" stroke="#111" stroke-width="1.5"/></svg>
<div class="fn" style="left:67px;top:332.6px">sub_405872</div>
<svg class="a" style="left:34.9px;top:357.8px" width="21" height="21" viewBox="0 0 21 21"><rect width="21" height="3.7" fill="#12d0f8"/><rect y="4.7" width="21" height="16.3" fill="#efefef"/><path d="M14.8 7.2 Q13.5 6.4 12.4 7.4 Q11.6 8.4 11.1 11 L9.7 17.6 Q9.2 19.6 7.2 19.2" stroke="#111" stroke-width="1.7" fill="none"/><path d="M8.6 11.2 H13.4" stroke="#111" stroke-width="1.5"/></svg>
<div class="fn" style="left:67px;top:358.1px">sub_4059D2</div>
<svg class="a" style="left:34.9px;top:383.3px" width="21" height="21" viewBox="0 0 21 21"><rect width="21" height="3.7" fill="#12d0f8"/><rect y="4.7" width="21" height="16.3" fill="#efefef"/><path d="M14.8 7.2 Q13.5 6.4 12.4 7.4 Q11.6 8.4 11.1 11 L9.7 17.6 Q9.2 19.6 7.2 19.2" stroke="#111" stroke-width="1.7" fill="none"/><path d="M8.6 11.2 H13.4" stroke="#111" stroke-width="1.5"/></svg>
<div class="fn" style="left:67px;top:383.6px">sub_405A95</div>
<svg class="a" style="left:34.9px;top:408.8px" width="21" height="21" viewBox="0 0 21 21"><rect width="21" height="3.7" fill="#12d0f8"/><rect y="4.7" width="21" height="16.3" fill="#efefef"/><path d="M14.8 7.2 Q13.5 6.4 12.4 7.4 Q11.6 8.4 11.1 11 L9.7 17.6 Q9.2 19.6 7.2 19.2" stroke="#111" stroke-width="1.7" fill="none"/><path d="M8.6 11.2 H13.4" stroke="#111" stroke-width="1.5"/></svg>
<div class="fn" style="left:67px;top:409.1px">sub_405F94</div>
<svg class="a" style="left:34.9px;top:434.3px" width="21" height="21" viewBox="0 0 21 21"><rect width="21" height="3.7" fill="#12d0f8"/><rect y="4.7" width="21" height="16.3" fill="#efefef"/><path d="M14.8 7.2 Q13.5 6.4 12.4 7.4 Q11.6 8.4 11.1 11 L9.7 17.6 Q9.2 19.6 7.2 19.2" stroke="#111" stroke-width="1.7" fill="none"/><path d="M8.6 11.2 H13.4" stroke="#111" stroke-width="1.5"/></svg>
<div class="fn" style="left:67px;top:434.6px">sub_4060FE</div>
<svg class="a" style="left:34.9px;top:459.8px" width="21" height="21" viewBox="0 0 21 21"><rect width="21" height="3.7" fill="#12d0f8"/><rect y="4.7" width="21" height="16.3" fill="#efefef"/><path d="M14.8 7.2 Q13.5 6.4 12.4 7.4 Q11.6 8.4 11.1 11 L9.7 17.6 Q9.2 19.6 7.2 19.2" stroke="#111" stroke-width="1.7" fill="none"/><path d="M8.6 11.2 H13.4" stroke="#111" stroke-width="1.5"/></svg>
<div class="fn" style="left:67px;top:460.1px">sub_406190</div>
<svg class="a" style="left:34.9px;top:485.3px" width="21" height="21" viewBox="0 0 21 21"><rect width="21" height="3.7" fill="#12d0f8"/><rect y="4.7" width="21" height="16.3" fill="#efefef"/><path d="M14.8 7.2 Q13.5 6.4 12.4 7.4 Q11.6 8.4 11.1 11 L9.7 17.6 Q9.2 19.6 7.2 19.2" stroke="#111" stroke-width="1.7" fill="none"/><path d="M8.6 11.2 H13.4" stroke="#111" stroke-width="1.5"/></svg>
<div class="fn" style="left:67px;top:485.6px">sub_4072BE</div>
<svg class="a" style="left:34.9px;top:510.8px" width="21" height="21" viewBox="0 0 21 21"><rect width="21" height="3.7" fill="#12d0f8"/><rect y="4.7" width="21" height="16.3" fill="#efefef"/><path d="M14.8 7.2 Q13.5 6.4 12.4 7.4 Q11.6 8.4 11.1 11 L9.7 17.6 Q9.2 19.6 7.2 19.2" stroke="#111" stroke-width="1.7" fill="none"/><path d="M8.6 11.2 H13.4" stroke="#111" stroke-width="1.5"/></svg>
<div class="fn" style="left:67px;top:511.1px">sub_407314</div>
<svg class="a" style="left:34.9px;top:536.3px" width="21" height="21" viewBox="0 0 21 21"><rect width="21" height="3.7" fill="#12d0f8"/><rect y="4.7" width="21" height="16.3" fill="#efefef"/><path d="M14.8 7.2 Q13.5 6.4 12.4 7.4 Q11.6 8.4 11.1 11 L9.7 17.6 Q9.2 19.6 7.2 19.2" stroke="#111" stroke-width="1.7" fill="none"/><path d="M8.6 11.2 H13.4" stroke="#111" stroke-width="1.5"/></svg>
<div class="fn" style="left:67px;top:536.6px">sub_40732D</div>
<svg class="a" style="left:34.9px;top:561.8px" width="21" height="21" viewBox="0 0 21 21"><rect width="21" height="3.7" fill="#12d0f8"/><rect y="4.7" width="21" height="16.3" fill="#efefef"/><path d="M14.8 7.2 Q13.5 6.4 12.4 7.4 Q11.6 8.4 11.1 11 L9.7 17.6 Q9.2 19.6 7.2 19.2" stroke="#111" stroke-width="1.7" fill="none"/><path d="M8.6 11.2 H13.4" stroke="#111" stroke-width="1.5"/></svg>
<div class="fn" style="left:67px;top:562.1px">sub_40733F</div>
<svg class="a" style="left:34.9px;top:587.3px" width="21" height="21" viewBox="0 0 21 21"><rect width="21" height="3.7" fill="#12d0f8"/><rect y="4.7" width="21" height="16.3" fill="#efefef"/><path d="M14.8 7.2 Q13.5 6.4 12.4 7.4 Q11.6 8.4 11.1 11 L9.7 17.6 Q9.2 19.6 7.2 19.2" stroke="#111" stroke-width="1.7" fill="none"/><path d="M8.6 11.2 H13.4" stroke="#111" stroke-width="1.5"/></svg>
<div class="fn" style="left:67px;top:587.6px">sub_407355</div>
<svg class="a" style="left:34.9px;top:612.8px" width="21" height="21" viewBox="0 0 21 21"><rect width="21" height="3.7" fill="#12d0f8"/><rect y="4.7" width="21" height="16.3" fill="#efefef"/><path d="M14.8 7.2 Q13.5 6.4 12.4 7.4 Q11.6 8.4 11.1 11 L9.7 17.6 Q9.2 19.6 7.2 19.2" stroke="#111" stroke-width="1.7" fill="none"/><path d="M8.6 11.2 H13.4" stroke="#111" stroke-width="1.5"/></svg>
<div class="fn" style="left:67px;top:613.1px">sub_407368</div>
<svg class="a" style="left:34.9px;top:638.3px" width="21" height="21" viewBox="0 0 21 21"><rect width="21" height="3.7" fill="#12d0f8"/><rect y="4.7" width="21" height="16.3" fill="#efefef"/><path d="M14.8 7.2 Q13.5 6.4 12.4 7.4 Q11.6 8.4 11.1 11 L9.7 17.6 Q9.2 19.6 7.2 19.2" stroke="#111" stroke-width="1.7" fill="none"/><path d="M8.6 11.2 H13.4" stroke="#111" stroke-width="1.5"/></svg>
<div class="fn" style="left:67px;top:638.6px">sub_407397</div>
<svg class="a" style="left:34.9px;top:663.8px" width="21" height="21" viewBox="0 0 21 21"><rect width="21" height="3.7" fill="#12d0f8"/><rect y="4.7" width="21" height="16.3" fill="#efefef"/><path d="M14.8 7.2 Q13.5 6.4 12.4 7.4 Q11.6 8.4 11.1 11 L9.7 17.6 Q9.2 19.6 7.2 19.2" stroke="#111" stroke-width="1.7" fill="none"/><path d="M8.6 11.2 H13.4" stroke="#111" stroke-width="1.5"/></svg>
<div class="fn" style="left:67px;top:664.1px">sub_4073AC</div>
<svg class="a" style="left:34.9px;top:689.3px" width="21" height="21" viewBox="0 0 21 21"><rect width="21" height="3.7" fill="#12d0f8"/><rect y="4.7" width="21" height="16.3" fill="#efefef"/><path d="M14.8 7.2 Q13.5 6.4 12.4 7.4 Q11.6 8.4 11.1 11 L9.7 17.6 Q9.2 19.6 7.2 19.2" stroke="#111" stroke-width="1.7" fill="none"/><path d="M8.6 11.2 H13.4" stroke="#111" stroke-width="1.5"/></svg>
<div class="fn" style="left:67px;top:689.6px">sub_4073C1</div>
<svg class="a" style="left:34.9px;top:714.8px" width="21" height="21" viewBox="0 0 21 21"><rect width="21" height="3.7" fill="#12d0f8"/><rect y="4.7" width="21" height="16.3" fill="#efefef"/><path d="M14.8 7.2 Q13.5 6.4 12.4 7.4 Q11.6 8.4 11.1 11 L9.7 17.6 Q9.2 19.6 7.2 19.2" stroke="#111" stroke-width="1.7" fill="none"/><path d="M8.6 11.2 H13.4" stroke="#111" stroke-width="1.5"/></svg>
<div class="fn" style="left:67px;top:715.1px">sub_4073FF</div>
<svg class="a" style="left:34.9px;top:740.3px" width="21" height="21" viewBox="0 0 21 21"><rect width="21" height="3.7" fill="#12d0f8"/><rect y="4.7" width="21" height="16.3" fill="#efefef"/><path d="M14.8 7.2 Q13.5 6.4 12.4 7.4 Q11.6 8.4 11.1 11 L9.7 17.6 Q9.2 19.6 7.2 19.2" stroke="#111" stroke-width="1.7" fill="none"/><path d="M8.6 11.2 H13.4" stroke="#111" stroke-width="1.5"/></svg>
<div class="fn" style="left:67px;top:740.6px">sub_40740F</div>
<svg class="a" style="left:34.9px;top:765.8px" width="21" height="21" viewBox="0 0 21 21"><rect width="21" height="3.7" fill="#12d0f8"/><rect y="4.7" width="21" height="16.3" fill="#efefef"/><path d="M14.8 7.2 Q13.5 6.4 12.4 7.4 Q11.6 8.4 11.1 11 L9.7 17.6 Q9.2 19.6 7.2 19.2" stroke="#111" stroke-width="1.7" fill="none"/><path d="M8.6 11.2 H13.4" stroke="#111" stroke-width="1.5"/></svg>
<div class="fn" style="left:67px;top:766.1px">sub_40743F</div>
<svg class="a" style="left:34.9px;top:791.3px" width="21" height="21" viewBox="0 0 21 21"><rect width="21" height="3.7" fill="#12d0f8"/><rect y="4.7" width="21" height="16.3" fill="#efefef"/><path d="M14.8 7.2 Q13.5 6.4 12.4 7.4 Q11.6 8.4 11.1 11 L9.7 17.6 Q9.2 19.6 7.2 19.2" stroke="#111" stroke-width="1.7" fill="none"/><path d="M8.6 11.2 H13.4" stroke="#111" stroke-width="1.5"/></svg>
<div class="fn" style="left:67px;top:791.6px">sub_40746F</div>
<svg class="a" style="left:34.9px;top:816.8px" width="21" height="21" viewBox="0 0 21 21"><rect width="21" height="3.7" fill="#12d0f8"/><rect y="4.7" width="21" height="16.3" fill="#efefef"/><path d="M14.8 7.2 Q13.5 6.4 12.4 7.4 Q11.6 8.4 11.1 11 L9.7 17.6 Q9.2 19.6 7.2 19.2" stroke="#111" stroke-width="1.7" fill="none"/><path d="M8.6 11.2 H13.4" stroke="#111" stroke-width="1.5"/></svg>
<div class="fn" style="left:67px;top:817.1px">sub_4074E4</div>
<svg class="a" style="left:34.9px;top:842.3px" width="21" height="21" viewBox="0 0 21 21"><rect width="21" height="3.7" fill="#12d0f8"/><rect y="4.7" width="21" height="16.3" fill="#efefef"/><path d="M14.8 7.2 Q13.5 6.4 12.4 7.4 Q11.6 8.4 11.1 11 L9.7 17.6 Q9.2 19.6 7.2 19.2" stroke="#111" stroke-width="1.7" fill="none"/><path d="M8.6 11.2 H13.4" stroke="#111" stroke-width="1.5"/></svg>
<div class="fn" style="left:67px;top:842.6px">sub_407504</div>
<svg class="a" style="left:34.9px;top:867.8px" width="21" height="21" viewBox="0 0 21 21"><rect width="21" height="3.7" fill="#12d0f8"/><rect y="4.7" width="21" height="16.3" fill="#efefef"/><path d="M14.8 7.2 Q13.5 6.4 12.4 7.4 Q11.6 8.4 11.1 11 L9.7 17.6 Q9.2 19.6 7.2 19.2" stroke="#111" stroke-width="1.7" fill="none"/><path d="M8.6 11.2 H13.4" stroke="#111" stroke-width="1.5"/></svg>
<div class="fn" style="left:67px;top:868.1px">sub_407566</div>
<svg class="a" style="left:34.9px;top:893.3px" width="21" height="21" viewBox="0 0 21 21"><rect width="21" height="3.7" fill="#12d0f8"/><rect y="4.7" width="21" height="16.3" fill="#efefef"/><path d="M14.8 7.2 Q13.5 6.4 12.4 7.4 Q11.6 8.4 11.1 11 L9.7 17.6 Q9.2 19.6 7.2 19.2" stroke="#111" stroke-width="1.7" fill="none"/><path d="M8.6 11.2 H13.4" stroke="#111" stroke-width="1.5"/></svg>
</div>
<div class="a" style="left:20px;top:1193.5px;width:122px;height:2px;background:#8a8a8a;border-radius:1px"></div>
<div class="box" style="left:519px;top:207px;width:406px;height:32px;background:#2b2b2b;border-color:#3a3a3a;border-radius:6px"></div>
<svg class="a" style="left:535.3px;top:209.4px" width="21" height="22" viewBox="0 0 21 22"><rect width="21" height="3.7" fill="#12d0f8"/><rect y="4.7" width="21" height="17.3" fill="#f8f8f8"/><path d="M2.6 5 V22 M18.4 5 V22" stroke="#444" stroke-width="1.2"/><rect x="4" y="6.5" width="13" height="14" rx="1.5" fill="#ececec" stroke="#666" stroke-width="1"/><path d="M5.5 9.5 H7 M5.5 12.5 H7 M5.5 15.5 H7 M5.5 18 H7" stroke="#1070c0" stroke-width="1.6"/><path d="M8.5 9.5 H16 M8.5 12.5 H16 M8.5 15.5 H16 M8.5 18 H16" stroke="#222" stroke-width="1.6"/></svg>
<div class="t" style="left:517.5px;width:406px;text-align:center;top:211.8px;font-size:19.5px">IDA View-A</div>
<svg class="a" style="left:883.5px;top:211.5px" width="21" height="21" viewBox="0 0 21 21"><rect x="1" y="1" width="19" height="19" rx="1.5" fill="#e8875a" stroke="#d93a20" stroke-width="2"/><path d="M6 6 L15 15 M15 6 L6 15" stroke="#fff" stroke-width="2"/></svg>
<div class="box" style="left:929px;top:207px;width:403px;height:32px;background:#1e1e1e;border-color:#333;border-radius:6px"></div>
<svg class="a" style="left:945.3px;top:211.0px" width="21" height="22" viewBox="0 0 21 22"><rect width="21" height="3.7" fill="#12d0f8"/><rect y="4.7" width="21" height="17.3" fill="#f0f0f0"/><path d="M7 7 H14 L18 13 L14 20 H7 L3 13 Z" fill="none" stroke="#222" stroke-width="1.3"/><circle cx="10.5" cy="16" r="4.2" fill="#222"/><path d="M10.5 12.5 V18.5 M8 16 L10.5 19 L13 16" stroke="#40e890" stroke-width="2" fill="none"/></svg>
<div class="t" style="left:927.5px;width:403px;text-align:center;top:213.08px;font-size:19.5px">Hex View-1</div>
<svg class="a" style="left:1290.5px;top:212.5px" width="21" height="21" viewBox="0 0 21 21"><rect x="0.5" y="0.5" width="20" height="20" rx="1.5" fill="#a0a0a0" stroke="#8a8a8a" stroke-width="1"/><path d="M6 6 L15 15 M15 6 L6 15" stroke="#e4e4e4" stroke-width="2"/></svg>
<div class="box" style="left:1336px;top:207px;width:406px;height:32px;background:#1e1e1e;border-color:#333;border-radius:6px"></div>
<svg class="a" style="left:1352.3px;top:211.0px" width="21" height="22" viewBox="0 0 21 22"><rect width="21" height="3.7" fill="#12d0f8"/><rect y="4.7" width="21" height="17.3" fill="#f0f0f0"/><circle cx="10.5" cy="13" r="7" fill="#222"/><path d="M10.5 8.5 V17 Q10.5 18.3 12.5 18.3 M8.3 11 H12.8" stroke="#fff" stroke-width="2.2" fill="none"/></svg>
<div class="t" style="left:1334.5px;width:406px;text-align:center;top:213.08px;font-size:19.5px">Local Types</div>
<svg class="a" style="left:1700.5px;top:212.5px" width="21" height="21" viewBox="0 0 21 21"><rect x="0.5" y="0.5" width="20" height="20" rx="1.5" fill="#a0a0a0" stroke="#8a8a8a" stroke-width="1"/><path d="M6 6 L15 15 M15 6 L6 15" stroke="#e4e4e4" stroke-width="2"/></svg>
<div class="box" style="left:1745.5px;top:207px;width:404.0px;height:32px;background:#1e1e1e;border-color:#333;border-radius:6px"></div>
<svg class="a" style="left:1761.8px;top:211.0px" width="21" height="22" viewBox="0 0 21 22"><rect width="21" height="3.7" fill="#12d0f8"/><rect y="4.7" width="21" height="17.3" fill="#f0f0f0"/><path d="M9 8 H20 M9 11 H20 M9 14 H20 M9 17 H20 M2 14 H9 M2 17 H9 M2 20 H20" stroke="#555" stroke-width="1.3"/><path d="M1.5 6 L9 11 L1.5 16 Z" fill="#40e890" stroke="#228855" stroke-width="0.8"/></svg>
<div class="t" style="left:1744.0px;width:404.0px;text-align:center;top:213.08px;font-size:19.5px">Imports</div>
<svg class="a" style="left:2108.0px;top:212.5px" width="21" height="21" viewBox="0 0 21 21"><rect x="0.5" y="0.5" width="20" height="20" rx="1.5" fill="#a0a0a0" stroke="#8a8a8a" stroke-width="1"/><path d="M6 6 L15 15 M15 6 L6 15" stroke="#e4e4e4" stroke-width="2"/></svg>
<div class="box" style="left:2153.5px;top:207px;width:405.5px;height:32px;background:#1e1e1e;border-color:#333;border-radius:6px"></div>
<svg class="a" style="left:2169.8px;top:211.0px" width="21" height="22" viewBox="0 0 21 22"><rect width="21" height="3.7" fill="#12d0f8"/><rect y="4.7" width="21" height="17.3" fill="#f0f0f0"/><path d="M1 8 H12 M1 11 H12 M1 14 H12 M1 17 H12 M1 20 H20 M12 17 H20" stroke="#555" stroke-width="1.3"/><path d="M12 6 L19.5 11 L12 16 Z" fill="#40e890" stroke="#228855" stroke-width="0.8"/></svg>
<div class="t" style="left:2152.0px;width:405.5px;text-align:center;top:213.08px;font-size:19.5px">Exports</div>
<svg class="a" style="left:2517.5px;top:212.5px" width="21" height="21" viewBox="0 0 21 21"><rect x="0.5" y="0.5" width="20" height="20" rx="1.5" fill="#a0a0a0" stroke="#8a8a8a" stroke-width="1"/><path d="M6 6 L15 15 M15 6 L6 15" stroke="#e4e4e4" stroke-width="2"/></svg>
<div class="a" style="left:516px;top:239px;width:2024px;height:2px;background:#141414"></div>
<div class="a" style="left:516px;top:240px;width:113px;height:996px;background:#fff"></div>
<div class="a" style="left:636px;top:241px;width:1904px;height:965px;background:#fff;overflow:hidden">
<div class="a" style="left:0;top:0;width:1904px;height:23.5px;background:#e4e4e4"></div>
<div class="a" style="left:24px;top:0;width:3px;height:24px;background:#000"></div>
</div>
<div class="box" style="left:2540px;top:241px;width:19px;height:993px;border-radius:0 8px 0 0;background:#2b2b2b"></div>
<div class="a" style="left:2548.5px;top:265px;width:2px;height:25px;background:#909090;border-radius:1px"></div>
<div class="a" style="left:636px;top:241px;width:1904px;height:965px;overflow:hidden">
<div class="dl" style="left:24px;top:1.8px"><span style="color:#0838ff">.text:00000000004046D0</span></div>
<div class="dl" style="left:24px;top:25.8px"><span style="color:#0838ff">.text:00000000004046D0</span> <span style="color:#808080">; =============== S U B R O U T I N E =======================================</span></div>
<div class="dl" style="left:24px;top:49.8px"><span style="color:#0838ff">.text:00000000004046D0</span></div>
<div class="dl" style="left:24px;top:73.8px"><span style="color:#0838ff">.text:00000000004046D0</span> <span style="color:#808080">; Attributes: noreturn fuzzy-sp</span></div>
<div class="dl" style="left:24px;top:97.8px"><span style="color:#0838ff">.text:00000000004046D0</span></div>
<div class="dl" style="left:24px;top:121.8px"><span style="color:#0838ff">.text:00000000004046D0</span>                 <span style="color:#000080">public start</span></div>
<div class="dl" style="left:24px;top:145.8px"><span style="color:#0838ff">.text:00000000004046D0</span> <span style="color:#000080">start</span>           <span style="color:#000080">proc near</span>               <span style="color:#8080ff">; DATA XREF: LOAD:0000000000400018</span><span style="color:#8080ff"><svg style="display:inline-block;vertical-align:top;margin-right:0.47px" width="10.22" height="24" viewBox="0 0 10.22 24"><path d="M5.1 4.5 V17.5 M1.6 8 L5.1 4.3 L8.6 8" stroke="#8080ff" stroke-width="1.3" fill="none"/></svg></span><span style="color:#8080ff">o</span></div>
<div class="dl" style="left:24px;top:169.8px"><span style="color:#0838ff">.text:00000000004046D0</span> <span style="color:#000080">; __unwind {</span></div>
<div class="dl" style="left:24px;top:193.8px"><span style="color:#0838ff">.text:00000000004046D0</span>                 <span style="color:#000080">endbr64</span></div>
<div class="dl" style="left:24px;top:217.8px"><span style="color:#000">.text:00000000004046D4</span>                 <span style="color:#000080">xor     </span><span style="color:#000080">ebp, ebp</span></div>
<div class="dl" style="left:24px;top:241.8px"><span style="color:#000">.text:00000000004046D6</span>                 <span style="color:#000080">mov     </span><span style="color:#000080">r9, rdx</span></div>
<div class="dl" style="left:24px;top:265.8px"><span style="color:#000">.text:00000000004046D9</span>                 <span style="color:#000080">pop     </span><span style="color:#000080">rsi</span></div>
<div class="dl" style="left:24px;top:289.8px"><span style="color:#000">.text:00000000004046DA</span>                 <span style="color:#000080">mov     </span><span style="color:#000080">rdx, rsp</span></div>
<div class="dl" style="left:24px;top:313.8px"><span style="color:#000">.text:00000000004046DD</span>                 <span style="color:#000080">and     </span><span style="color:#000080">rsp, </span><span style="color:#008000">0FFFFFFFFFFFFFFF0h</span></div>
<div class="dl" style="left:24px;top:337.8px"><span style="color:#000">.text:00000000004046E1</span>                 <span style="color:#000080">push    </span><span style="color:#000080">rax</span></div>
<div class="dl" style="left:24px;top:361.8px"><span style="color:#000">.text:00000000004046E2</span>                 <span style="color:#000080">push    </span><span style="color:#000080">rsp</span></div>
<div class="dl" style="left:24px;top:385.8px"><span style="color:#000">.text:00000000004046E3</span>                 <span style="color:#000080">xor     </span><span style="color:#000080">r8d, r8d</span></div>
<div class="dl" style="left:24px;top:409.8px"><span style="color:#000">.text:00000000004046E6</span>                 <span style="color:#000080">xor     </span><span style="color:#000080">ecx, ecx</span></div>
<div class="dl" style="left:24px;top:433.8px"><span style="color:#000">.text:00000000004046E8</span>                 <span style="color:#000080">mov     </span><span style="color:#000080">rdi, offset sub_406190</span></div>
<div class="dl" style="left:24px;top:457.8px"><span style="color:#000">.text:00000000004046EF</span>                 <span style="color:#000080">db      </span><span style="color:#008000">67h</span></div>
<div class="dl" style="left:24px;top:481.8px"><span style="color:#000">.text:00000000004046EF</span>                 <span style="color:#000080">call    </span><span style="color:#000080">sub_4B0F00</span></div>
<div class="dl" style="left:24px;top:505.8px"><span style="color:#000">.text:00000000004046F5</span>                 <span style="color:#000080">hlt</span></div>
<div class="dl" style="left:24px;top:529.8px"><span style="color:#000">.text:00000000004046F5</span> <span style="color:#000080">; } </span><span style="color:#0000ff">// starts at 4046D0</span></div>
<div class="dl" style="left:24px;top:553.8px"><span style="color:#000">.text:00000000004046F5</span> <span style="color:#000080">start</span>           <span style="color:#000080">endp</span></div>
<div class="dl" style="left:24px;top:577.8px"><span style="color:#000">.text:00000000004046F5</span></div>
<div class="dl" style="left:24px;top:601.8px"><span style="color:#000">.text:00000000004046F5</span> <span style="color:#808080">; ---------------------------------------------------------------------------</span></div>
<div class="dl" style="left:24px;top:625.8px"><span style="color:#808000">.text:00000000004046F6</span>                 <span style="color:#000080">db  </span><span style="color:#007040">66h</span><span style="color:#808080"> ; f</span></div>
<div class="dl" style="left:24px;top:649.8px"><span style="color:#808000">.text:00000000004046F7</span>                 <span style="color:#000080">db  </span><span style="color:#007040">2Eh</span><span style="color:#808080"> ; .</span></div>
<div class="dl" style="left:24px;top:673.8px"><span style="color:#808000">.text:00000000004046F8</span>                 <span style="color:#000080">db  </span><span style="color:#007040">0Fh</span></div>
<div class="dl" style="left:24px;top:697.8px"><span style="color:#808000">.text:00000000004046F9</span>                 <span style="color:#000080">db  </span><span style="color:#007040">1Fh</span></div>
<div class="dl" style="left:24px;top:721.8px"><span style="color:#808000">.text:00000000004046FA</span>                 <span style="color:#000080">db  </span><span style="color:#007040">84h</span></div>
<div class="dl" style="left:24px;top:745.8px"><span style="color:#808000">.text:00000000004046FB</span>                 <span style="color:#000080">db  </span><span style="color:#007040">  0</span></div>
<div class="dl" style="left:24px;top:769.8px"><span style="color:#808000">.text:00000000004046FC</span>                 <span style="color:#000080">db  </span><span style="color:#007040">  0</span></div>
<div class="dl" style="left:24px;top:793.8px"><span style="color:#808000">.text:00000000004046FD</span>                 <span style="color:#000080">db  </span><span style="color:#007040">  0</span></div>
<div class="dl" style="left:24px;top:817.8px"><span style="color:#808000">.text:00000000004046FE</span>                 <span style="color:#000080">db  </span><span style="color:#007040">  0</span></div>
<div class="dl" style="left:24px;top:841.8px"><span style="color:#808000">.text:00000000004046FF</span>                 <span style="color:#000080">db  </span><span style="color:#007040">  0</span></div>
<div class="dl" style="left:24px;top:865.8px"><span style="color:#000">.text:0000000000404700</span></div>
<div class="dl" style="left:24px;top:889.8px"><span style="color:#000">.text:0000000000404700</span> <span style="color:#808080">; =============== S U B R O U T I N E =======================================</span></div>
<div class="dl" style="left:24px;top:913.8px"><span style="color:#000">.text:0000000000404700</span></div>
<div class="dl" style="left:24px;top:937.8px"><span style="color:#000">.text:0000000000404700</span></div>
</div>
<div class="a" style="left:612px;top:433.0px;width:9px;height:9px;border-radius:50%;background:#66d0ff"></div>
<div class="a" style="left:612px;top:457.0px;width:9px;height:9px;border-radius:50%;background:#66d0ff"></div>
<div class="a" style="left:612px;top:481.0px;width:9px;height:9px;border-radius:50%;background:#66d0ff"></div>
<div class="a" style="left:612px;top:505.0px;width:9px;height:9px;border-radius:50%;background:#66d0ff"></div>
<div class="a" style="left:612px;top:529.0px;width:9px;height:9px;border-radius:50%;background:#66d0ff"></div>
<div class="a" style="left:612px;top:553.0px;width:9px;height:9px;border-radius:50%;background:#66d0ff"></div>
<div class="a" style="left:612px;top:577.0px;width:9px;height:9px;border-radius:50%;background:#66d0ff"></div>
<div class="a" style="left:612px;top:601.0px;width:9px;height:9px;border-radius:50%;background:#66d0ff"></div>
<div class="a" style="left:612px;top:625.0px;width:9px;height:9px;border-radius:50%;background:#66d0ff"></div>
<div class="a" style="left:612px;top:649.0px;width:9px;height:9px;border-radius:50%;background:#66d0ff"></div>
<div class="a" style="left:612px;top:673.0px;width:9px;height:9px;border-radius:50%;background:#66d0ff"></div>
<div class="a" style="left:612px;top:721.0px;width:9px;height:9px;border-radius:50%;background:#66d0ff"></div>
<div class="a" style="left:612px;top:745.0px;width:9px;height:9px;border-radius:50%;background:#66d0ff"></div>
<div class="a" style="left:612px;top:865.0px;width:9px;height:9px;border-radius:50%;background:#66d0ff"></div>
<div class="a" style="left:612px;top:889.0px;width:9px;height:9px;border-radius:50%;background:#66d0ff"></div>
<div class="a" style="left:612px;top:913.0px;width:9px;height:9px;border-radius:50%;background:#66d0ff"></div>
<div class="a" style="left:612px;top:937.0px;width:9px;height:9px;border-radius:50%;background:#66d0ff"></div>
<div class="a" style="left:612px;top:961.0px;width:9px;height:9px;border-radius:50%;background:#66d0ff"></div>
<div class="a" style="left:612px;top:985.0px;width:9px;height:9px;border-radius:50%;background:#66d0ff"></div>
<div class="a" style="left:612px;top:1009.0px;width:9px;height:9px;border-radius:50%;background:#66d0ff"></div>
<div class="a" style="left:612px;top:1033.0px;width:9px;height:9px;border-radius:50%;background:#66d0ff"></div>
<div class="a" style="left:612px;top:1057.0px;width:9px;height:9px;border-radius:50%;background:#66d0ff"></div>
<div class="a" style="left:612px;top:1081.0px;width:9px;height:9px;border-radius:50%;background:#66d0ff"></div>
<div class="m t" style="left:640.5px;top:1212.7px;font-size:17.8px;color:#c8c8c8">000046D0</div>
<div class="a" style="left:728px;top:1209px;width:1px;height:23px;background:#c8c8c8"></div>
<div class="m t" style="left:736px;top:1212.7px;font-size:17.8px;color:#c8c8c8">00000000004046D0: start</div>
<div class="a" style="left:986px;top:1209px;width:1px;height:23px;background:#c8c8c8"></div>
<div class="m t" style="left:994px;top:1212.7px;font-size:17.8px;color:#c8c8c8">(Synchronized with Hex View-1)</div>
<div class="a" style="left:1316px;top:1209px;width:1px;height:23px;background:#c8c8c8"></div>
<div class="a" style="left:2513.5px;top:1206px;width:45px;height:28px;background:#2b2b2b;border-radius:0 0 8px 0;border-right:1px solid #3a3a3a;border-bottom:1px solid #3a3a3a"></div>
<div class="box" style="left:1.5px;top:1243px;width:2557px;height:42px;border-radius:7px"></div>
<svg class="a" style="left:7.4px;top:1252px" width="21" height="22" viewBox="0 0 21 22"><rect width="21" height="3.7" fill="#12d0f8"/><rect y="4.7" width="21" height="17.3" fill="#f8f8f8"/><path d="M2.6 5 V22 M18.4 5 V22" stroke="#444" stroke-width="1.2"/><rect x="4" y="6.5" width="13" height="14" rx="1.5" fill="#ececec" stroke="#666" stroke-width="1"/><path d="M5.5 9.5 H7 M5.5 12.5 H7 M5.5 15.5 H7 M5.5 18 H7" stroke="#1070c0" stroke-width="1.6"/><path d="M8.5 9.5 H16 M8.5 12.5 H16 M8.5 15.5 H16 M8.5 18 H16" stroke="#222" stroke-width="1.6"/></svg>
<div class="t" style="left:39px;top:1252.2px;font-size:20px">Output</div>
<div class="a" style="left:2454px;top:1257px;width:14px;height:14px;box-sizing:border-box;border:1.5px solid #3a3a3a;border-top-width:3px"></div>
<svg class="a" style="left:2494px;top:1256px" width="14" height="14" viewBox="0 0 14 14" fill="none" stroke="#3a3a3a" stroke-width="1.5"><rect x="1" y="5" width="8" height="8"/><path d="M5 5 V1 H13 V9 H9"/></svg>
<svg class="a" style="left:2533px;top:1258px" width="12" height="12" viewBox="0 0 12 12" stroke="#3a3a3a" stroke-width="1.6"><path d="M1 1 L11 11 M11 1 L1 11"/></svg>
<div class="a" style="left:0;top:1287.5px;width:2560px;height:2.5px;background:#151515"></div>
<div class="a" style="left:0;top:1289.5px;width:2560px;height:171.5px;background:#fff"></div>
<div class="dl" style="left:10.5px;top:1291.8px">Hex-rays version 9.2.0.250718 has been detected, gooMBA plugin ready to use</div>
<div class="dl" style="left:10.5px;top:1315.8px">IDA is analysing the input file...</div>
<div class="dl" style="left:10.5px;top:1339.8px">You may start to explore the input file right now.</div>
<div class="dl" style="left:10.5px;top:1363.8px">-----------------------------------------------------------------------------------------</div>
<div class="dl" style="left:10.5px;top:1387.8px">Python 3.11.6 (tags/v3.11.6:8b6ee5b, Oct  2 2023, 14:57:12) [MSC v.1935 64 bit (AMD64)]</div>
<div class="dl" style="left:10.5px;top:1411.8px">IDAPython 64-bit v9.2.0 (c) The IDAPython Team &lt;idapython@googlegroups.com&gt;</div>
<div class="dl" style="left:10.5px;top:1435.8px">-----------------------------------------------------------------------------------------</div>
<div class="a" style="left:2548px;top:1414px;width:2px;height:26px;background:#a0a0a0"></div>
<div class="a" style="left:0;top:1461px;width:2560px;height:3px;background:#111"></div>
<div class="a" style="left:4.7px;top:1465px;width:86.5px;height:29.5px;box-sizing:border-box;border:1px solid #4a4a4a;border-radius:6px;background:#3a3a3a"></div>
<div class="t" style="left:18px;top:1471px;font-size:19.5px">Python</div>
<div class="a" style="left:101px;top:1466.5px;width:2457px;height:27.5px;box-sizing:border-box;border:1px solid #3a3a3a;border-radius:6px;background:#2e2e2e"></div>
<div class="a" style="left:106px;top:1493px;width:2443px;height:1.5px;background:#a0a0a0"></div>
<div class="m t" style="left:3.5px;top:1507px;font-size:17.8px;color:#d0d0d0">AC:00000000005422BD</div>
<div class="a" style="left:211.5px;top:1503px;width:1px;height:23px;background:#c8c8c8"></div>
<div class="m t" style="left:218px;top:1507px;font-size:17.8px;color:#d0d0d0">Down</div>
<div class="a" style="left:325px;top:1503px;width:1px;height:23px;background:#c8c8c8"></div>
<div class="m t" style="left:332px;top:1507px;font-size:17.8px;color:#d0d0d0">Disk: 765GB</div>
<div class="a" style="left:454px;top:1503px;width:1px;height:23px;background:#c8c8c8"></div>
</body></html>
